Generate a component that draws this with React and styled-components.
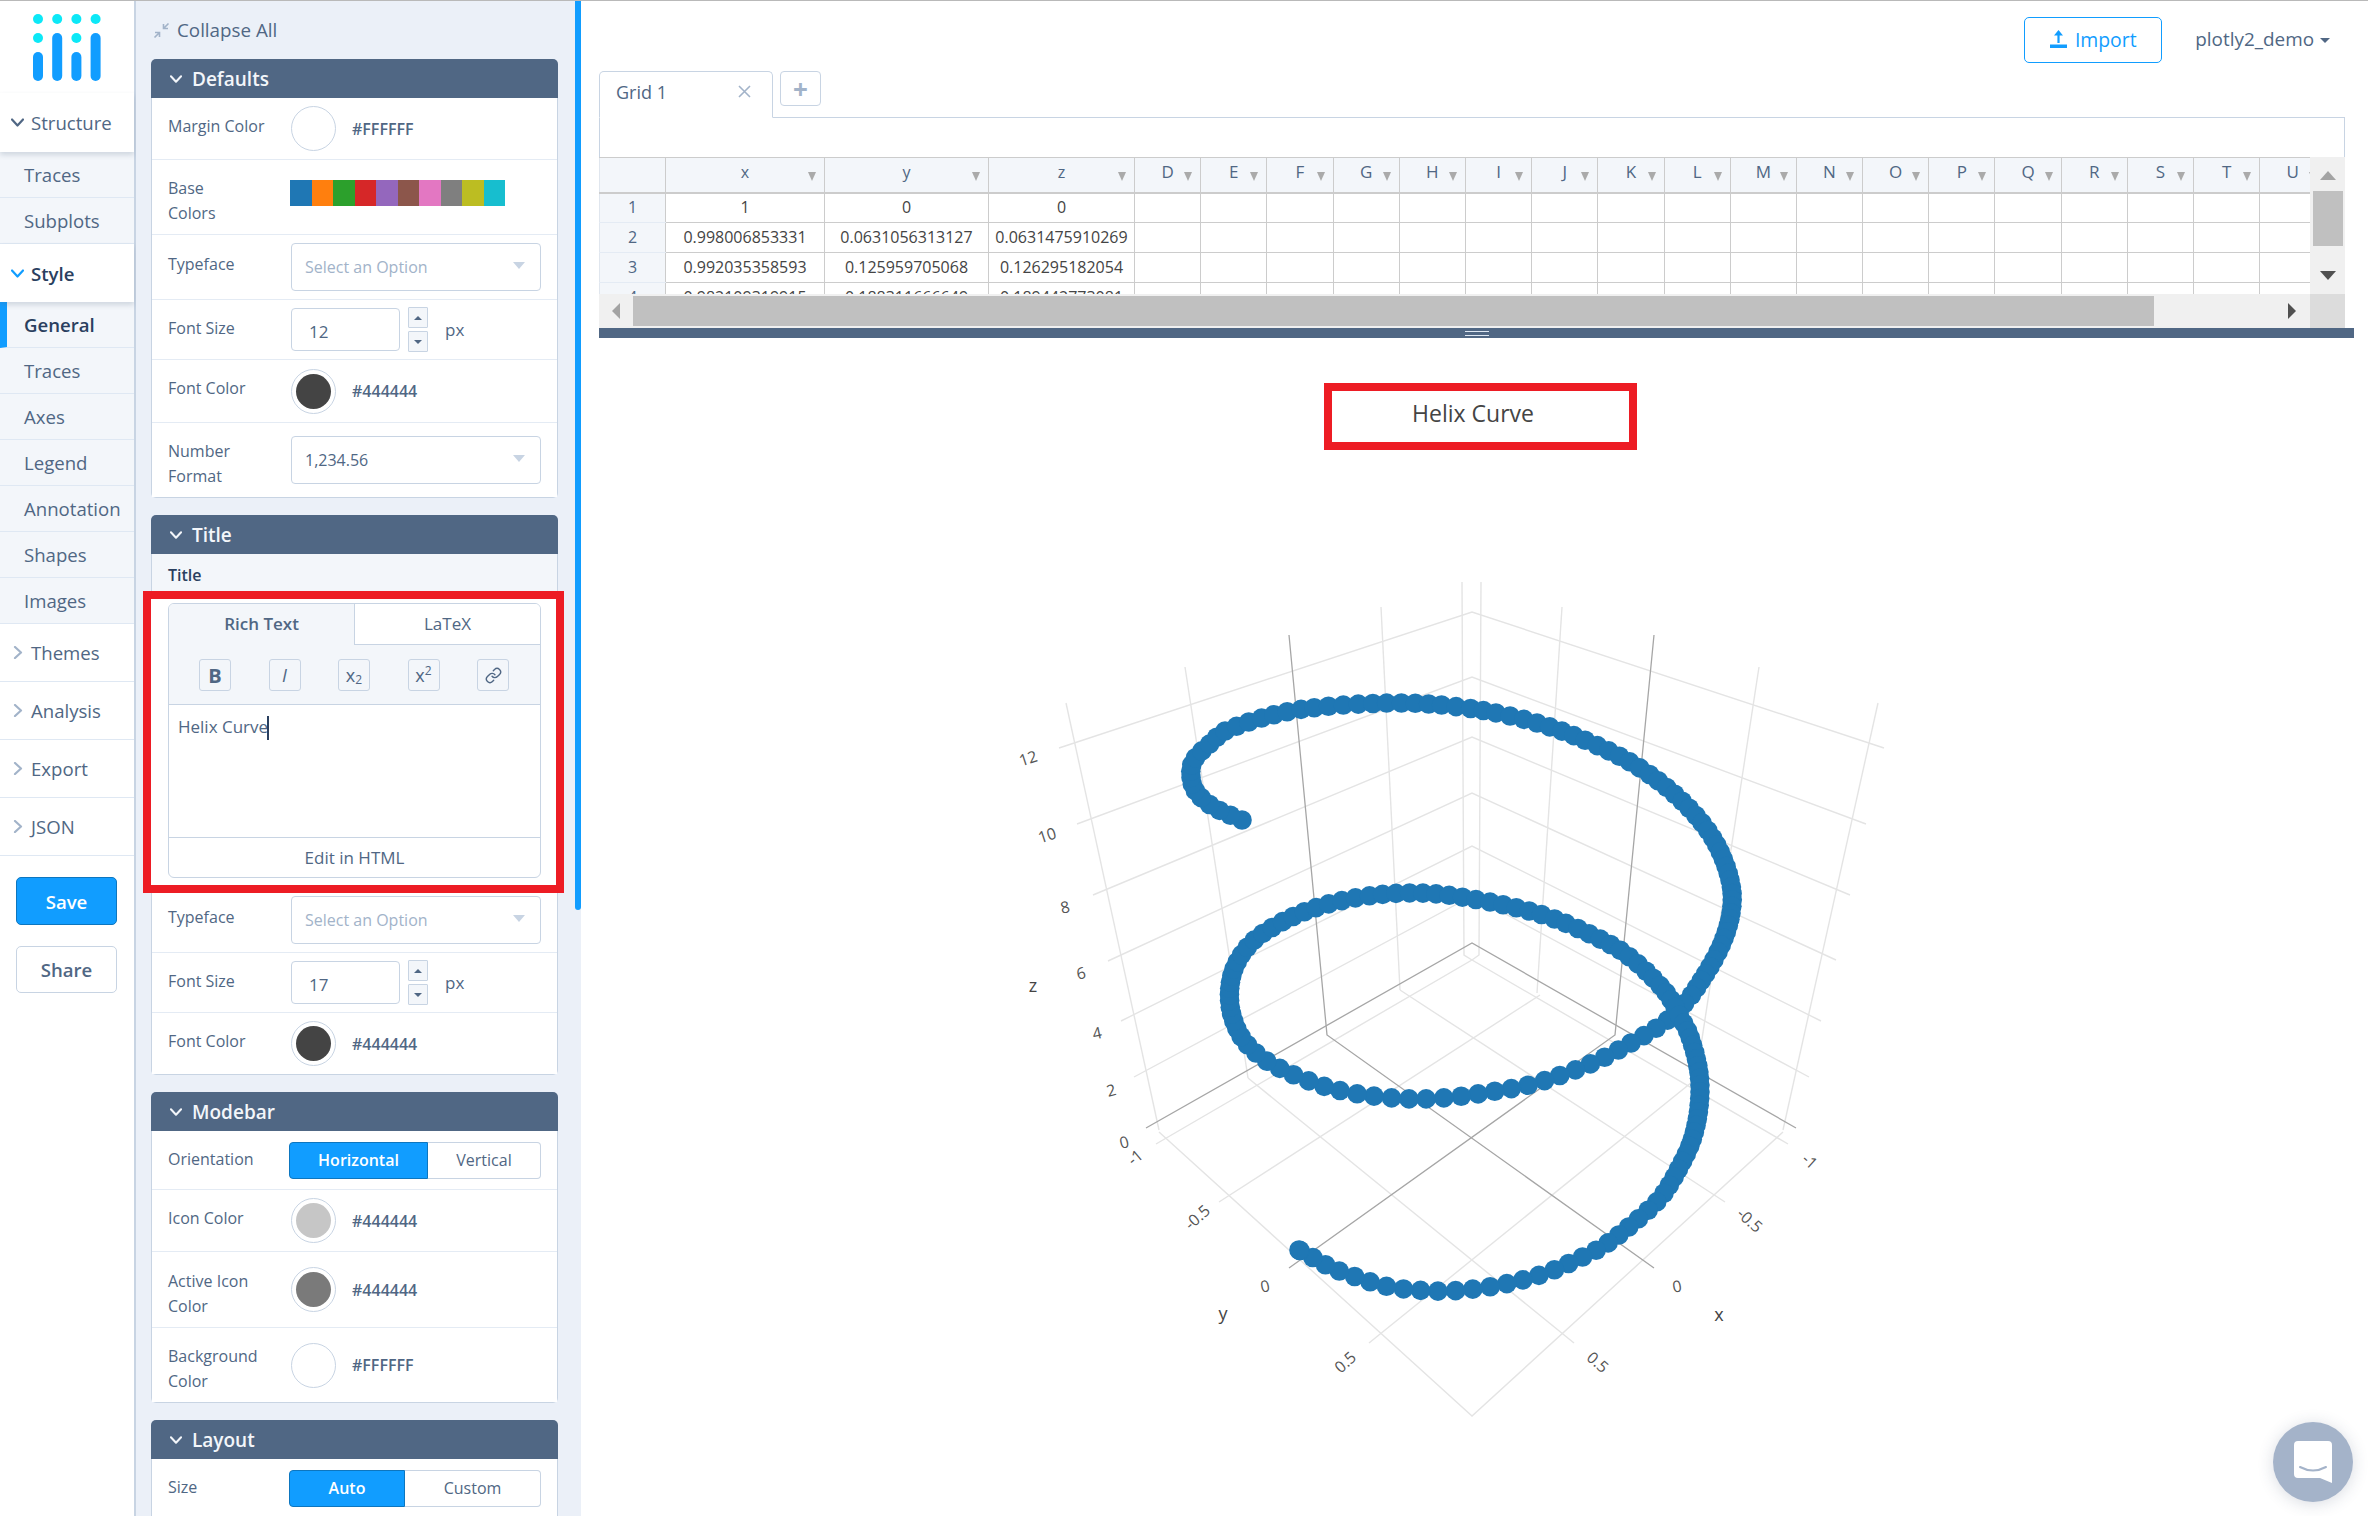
import React from "react";
import styled, { createGlobalStyle } from "styled-components";
import { Link } from "lucide-react";

const GlobalStyle = createGlobalStyle`
  html, body { margin: 0; padding: 0; background: #fff; }
  body { font-family: "Open Sans", "Noto Sans", sans-serif; color: #506784; }
  * { box-sizing: border-box; }
`;

const Page = styled.div`
  display: flex;
  width: 2368px;
  height: 1516px;
  overflow: hidden;
  position: relative;
  border-top: 1px solid #b9b9b9;
`;

/* left nav */
const Nav = styled.nav`
  width: 136px;
  flex: none;
  background: #fff;
  border-right: 2px solid #c8d4e3;
  display: flex;
  flex-direction: column;
`;
const LogoBox = styled.div`
  height: 92px;
  padding: 13px 0 0 33px;
`;
const NavHead = styled.div`
  height: ${(p) => p.$h || 59}px;
  display: flex;
  align-items: center;
  gap: 7px;
  padding: 0 0 0 11px;
  font-size: 18.6px;
  font-weight: ${(p) => (p.$active ? 600 : 400)};
  color: ${(p) => (p.$active ? "#2a3f5f" : "#506784")};
  background: #fff;
  position: relative;
  box-shadow: ${(p) => (p.$open ? "0 3px 5px rgba(80,103,132,.22)" : "none")};
  border-bottom: ${(p) => (p.$open ? "none" : "1px solid #dfe8f3")};
`;
const NavItem = styled.div`
  height: 46px;
  display: flex;
  align-items: center;
  padding-left: ${(p) => (p.$active ? 17 : 24)}px;
  font-size: 18.6px;
  font-weight: ${(p) => (p.$active ? 600 : 400)};
  color: ${(p) => (p.$active ? "#2a3f5f" : "#506784")};
  background: #f3f6fa;
  border-bottom: 1px solid #dfe8f3;
  border-left: ${(p) => (p.$active ? "7px solid #119dff" : "none")};
`;
const NavButton = styled.div`
  width: 101px;
  height: ${(p) => p.$h}px;
  margin: ${(p) => p.$top}px 0 0 16px;
  display: flex;
  align-items: center;
  justify-content: center;
  font-size: 18.6px;
  font-weight: 600;
  border-radius: 5px;
  color: ${(p) => (p.$primary ? "#fff" : "#506784")};
  background: ${(p) => (p.$primary ? "#119dff" : "#fff")};
  border: 1px solid ${(p) => (p.$primary ? "#0d76bf" : "#c8d4e3")};
`;

/* settings panel */
const Panel = styled.aside`
  width: 445px;
  flex: none;
  height: 100%;
  padding: 0 23px 0 15px;
  background: #ebf0f8;
  position: relative;
  overflow: hidden;
`;
const PanelThumb = styled.div`
  position: absolute;
  top: 0;
  right: 0;
  width: 6px;
  height: 909px;
  background: #119dff;
  border-radius: 0 0 3px 3px;
`;
const CollapseAll = styled.div`
  height: 58px;
  display: flex;
  align-items: center;
  gap: 7px;
  padding: 0 0 0 2px;
  font-size: 18.8px;
  color: #506784;
`;
const Section = styled.section`
  margin-bottom: 17px;
`;
const SectionHead = styled.div`
  height: 39px;
  display: flex;
  align-items: center;
  gap: 10px;
  padding-left: 19px;
  background: #506784;
  color: #f3f6fa;
  font-size: 19px;
  font-weight: 600;
  border-radius: 5px 5px 0 0;
`;
const SectionBody = styled.div`
  background: ${(p) => p.$bg || "#fff"};
  border: 1px solid #c8d4e3;
  border-top: none;
  border-radius: ${(p) => (p.$open ? 0 : "0 0 5px 5px")};
`;
const Row = styled.div`
  height: ${(p) => p.$h}px;
  display: flex;
  align-items: center;
  background: #fff;
  padding-bottom: ${(p) => p.$pb || 0}px;
  border-bottom: ${(p) => (p.$last ? "none" : "1px solid #e4ebf4")};
`;
const Label = styled.div`
  width: 139px;
  flex: none;
  padding-left: 16px;
  font-size: 16px;
  line-height: 25px;
  color: #506784;
  padding-bottom: ${(p) => (p.$two ? 0 : p.$lift ?? 5)}px;
  padding-top: ${(p) => (p.$two ? 8 : 0)}px;
`;
const PlainLabel = styled.div`
  height: 37px;
  display: flex;
  align-items: center;
  padding: 5px 0 0 16px;
  font-size: 16px;
  font-weight: 600;
  color: #2a3f5f;
`;
const Circle = styled.div`
  width: 45px;
  height: 45px;
  flex: none;
  border-radius: 50%;
  border: 1px solid #c8d4e3;
  background: #fff;
  display: flex;
  align-items: center;
  justify-content: center;
`;
const Dot = styled.div`
  width: 35px;
  height: 35px;
  border-radius: 50%;
  background: ${(p) => p.$color};
`;
const Hex = styled.div`
  margin-left: 16px;
  font-size: 16px;
  font-weight: 600;
  color: #506784;
`;
const Palette = styled.div`
  display: flex;
  align-self: flex-start;
  margin-left: -1px;
  margin-top: 20px;
`;
const PaletteCell = styled.div`
  width: 21.5px;
  height: 26px;
  background: ${(p) => p.$color};
`;
const SelectBox = styled.div`
  width: 250px;
  height: 48px;
  display: flex;
  align-items: center;
  justify-content: space-between;
  padding: 0 15px 0 13px;
  border: 1px solid #c8d4e3;
  border-radius: 4px;
  background: #fff;
  font-size: 16px;
  color: ${(p) => (p.$placeholder ? "#a2b3c9" : "#506784")};
`;
const SelectArrow = styled.span`
  width: 0;
  height: 0;
  margin-bottom: 4px;
  border-left: 6px solid transparent;
  border-right: 6px solid transparent;
  border-top: 7px solid #c8d4e3;
`;
const NumberBox = styled.div`
  width: 109px;
  height: 43px;
  display: flex;
  align-items: center;
  padding: 3px 0 0 17px;
  border: 1px solid #c8d4e3;
  border-radius: 4px;
  background: #fff;
  font-size: 17px;
  color: #506784;
`;
const Spinner = styled.div`
  display: flex;
  flex-direction: column;
  gap: 3px;
  margin-left: 8px;
`;
const SpinButton = styled.div`
  width: 20px;
  height: 21px;
  display: flex;
  align-items: center;
  justify-content: center;
  background: #f3f6fa;
  border: 1px solid #c8d4e3;
  border-radius: 1px;
`;
const SpinArrow = styled.span`
  width: 0;
  height: 0;
  border-left: 4px solid transparent;
  border-right: 4px solid transparent;
  ${(p) => (p.$up ? "border-bottom: 4px solid #506784;" : "border-top: 4px solid #506784;")}
`;
const Unit = styled.div`
  margin-left: 17px;
  font-size: 17px;
  color: #506784;
`;
const RadioGroup = styled.div`
  width: 252px;
  height: 37px;
  margin-left: -2px;
  display: flex;
`;
const RadioOption = styled.div`
  width: ${(p) => p.$w}px;
  flex: ${(p) => (p.$w ? "none" : 1)};
  display: flex;
  align-items: center;
  justify-content: center;
  font-size: 16px;
  font-weight: ${(p) => (p.$active ? 600 : 400)};
  color: ${(p) => (p.$active ? "#fff" : "#506784")};
  background: ${(p) => (p.$active ? "#119dff" : "#fff")};
  border: 1px solid ${(p) => (p.$active ? "#0d76bf" : "#c8d4e3")};
  border-left-width: ${(p) => (p.$active ? 1 : 0)}px;
  border-radius: ${(p) => (p.$active ? "4px 0 0 4px" : "0 4px 4px 0")};
`;

/* rich text box with the red highlight */
const Highlight = styled.div`
  height: 302px;
  margin: 0 -7px 0 -9px;
  padding: 4px 15px 7px 17px;
  background: #fff;
  border: 8px solid #ed1c24;
  position: relative;
`;
const Editor = styled.div`
  height: 275px;
  display: flex;
  flex-direction: column;
  border: 1px solid #c8d4e3;
  border-radius: 6px;
  overflow: hidden;
`;
const EditorTabs = styled.div`
  height: 41px;
  flex: none;
  display: flex;
`;
const EditorTab = styled.div`
  width: ${(p) => (p.$active ? "185px" : "auto")};
  flex: ${(p) => (p.$active ? "none" : 1)};
  display: flex;
  align-items: center;
  justify-content: center;
  padding-bottom: 2px;
  font-size: 17px;
  font-weight: ${(p) => (p.$active ? 600 : 400)};
  color: #506784;
  background: ${(p) => (p.$active ? "#f3f6fa" : "#fff")};
  border-left: ${(p) => (p.$active ? "none" : "1px solid #c8d4e3")};
  border-bottom: ${(p) => (p.$active ? "none" : "1px solid #c8d4e3")};
`;
const EditorToolbar = styled.div`
  height: 60px;
  flex: none;
  display: flex;
  justify-content: space-between;
  align-items: flex-start;
  padding: 14px 31px 0 30px;
  background: #f3f6fa;
  border-bottom: 1px solid #c8d4e3;
`;
const ToolButton = styled.div`
  width: 32px;
  height: 32px;
  display: flex;
  align-items: center;
  justify-content: center;
  background: #f3f6fa;
  border: 1px solid #c8d4e3;
  border-radius: 3px;
  color: #506784;
  font-size: ${(p) => (p.$bold ? 20 : 18)}px;
  font-weight: ${(p) => (p.$bold ? 700 : 400)};
  font-style: ${(p) => (p.$italic ? "italic" : "normal")};
  sub { font-size: 12px; line-height: 0; margin-top: 9px; }
  sup { font-size: 12px; line-height: 0; margin-top: -9px; }
`;
const EditorText = styled.div`
  flex: 1;
  padding: 9px 9px;
  font-size: 17px;
  line-height: 25px;
  color: #506784;
`;
const Caret = styled.span`
  display: inline-block;
  width: 2px;
  height: 24px;
  margin-left: -1px;
  vertical-align: middle;
  background: #2a3f5f;
`;
const EditorFooter = styled.div`
  height: 40px;
  flex: none;
  display: flex;
  align-items: center;
  justify-content: center;
  font-size: 17px;
  color: #506784;
  border-top: 1px solid #c8d4e3;
`;

/* main column */
const Main = styled.main`
  flex: 1;
  min-width: 0;
  display: flex;
  flex-direction: column;
`;
const TopBar = styled.div`
  height: 70px;
  flex: none;
  display: flex;
  justify-content: flex-end;
  align-items: flex-start;
  padding: 16px 38px 0 0;
`;
const ImportButton = styled.div`
  width: 138px;
  height: 46px;
  display: flex;
  align-items: center;
  justify-content: center;
  gap: 8px;
  padding-bottom: 2px;
  color: #119dff;
  font-size: 19.4px;
  border: 1px solid #119dff;
  border-radius: 5px;
`;
const UserMenu = styled.div`
  height: 46px;
  margin-left: 33px;
  padding-bottom: 2px;
  display: flex;
  align-items: center;
  gap: 6px;
  font-size: 18.9px;
  color: #506784;
`;
const UserCaret = styled.span`
  width: 0;
  height: 0;
  margin-top: 3px;
  border-left: 5px solid transparent;
  border-right: 5px solid transparent;
  border-top: 5px solid #506784;
`;
const GridPane = styled.div`
  flex: none;
  margin-left: 18px;
  width: 1746px;
`;
const TabBar = styled.div`
  height: 47px;
  display: flex;
  align-items: flex-start;
  gap: 7px;
  border-bottom: 1px solid #c8d4e3;
`;
const GridTab = styled.div`
  width: 174px;
  height: 47px;
  display: flex;
  align-items: center;
  justify-content: space-between;
  padding: 0 21px 6px 16px;
  background: #fff;
  font-size: 18px;
  color: #506784;
  border: 1px solid #c8d4e3;
  border-bottom: 1px solid #fff;
  border-radius: 5px 5px 0 0;
`;
const AddTab = styled.div`
  width: 41px;
  height: 35px;
  display: flex;
  align-items: center;
  justify-content: center;
  border: 1px solid #c8d4e3;
  border-radius: 4px;
  color: #a2b3c9;
  font-size: 26px;
  font-weight: 700;
  line-height: 1;
`;
const TabSpacer = styled.div`
  height: 39px;
  border-left: 1px solid #c8d4e3;
  border-right: 1px solid #c8d4e3;
`;
const Sheet = styled.div`
  height: 171px;
  display: grid;
  grid-template-columns: 1fr 35px;
  grid-template-rows: 137px 34px;
`;
const SheetView = styled.div`
  overflow: hidden;
`;
const Table = styled.table`
  table-layout: fixed;
  width: 1727px;
  border-collapse: collapse;
  font-size: 16px;
  color: #444;
`;
const HeadCell = styled.th`
  height: 35px;
  padding: 0 0 6px 0;
  position: relative;
  background: #f3f6fa;
  color: #506784;
  font-weight: 400;
  font-size: ${(p) => (p.$wide ? 16 : 17)}px;
  text-align: center;
  border: 1px solid #ccc;
  border-bottom-width: 2px;
  border-left-color: #e0e6ee;
`;
const FilterMark = styled.span`
  position: absolute;
  right: 8px;
  top: 14px;
  border-left: 4px solid transparent;
  border-right: 4px solid transparent;
  border-top: 9px solid #aaa;
`;
const RowHead = styled.td`
  height: 30px;
  padding: 0 0 1px;
  text-align: center;
  background: #f3f6fa;
  color: #506784;
  border: 1px solid #ccc;
  border-top-color: #e4ebf4;
  border-bottom-color: #e4ebf4;
  border-left-color: #e0e6ee;
`;
const Cell = styled.td`
  height: 30px;
  padding: 0 0 1px;
  text-align: center;
  white-space: nowrap;
  overflow: hidden;
  border: 1px solid #ccc;
`;
const VScroll = styled.div`
  background: #f0f0f0;
  display: flex;
  flex-direction: column;
  align-items: center;
  padding-top: 14px;
`;
const VThumb = styled.div`
  width: 30px;
  height: 55px;
  margin: 11px 0 25px;
  background: #c0c0c0;
`;
const ScrollArrow = styled.span`
  width: 0;
  height: 0;
  ${(p) => p.$dir === "up" && `border-left: 8px solid transparent; border-right: 8px solid transparent; border-bottom: 9px solid ${p.$color};`}
  ${(p) => p.$dir === "down" && `border-left: 8px solid transparent; border-right: 8px solid transparent; border-top: 9px solid ${p.$color};`}
  ${(p) => p.$dir === "left" && `border-top: 8px solid transparent; border-bottom: 8px solid transparent; border-right: 8px solid ${p.$color};`}
  ${(p) => p.$dir === "right" && `border-top: 8px solid transparent; border-bottom: 8px solid transparent; border-left: 8px solid ${p.$color};`}
`;
const HScroll = styled.div`
  background: #f0f0f0;
  display: flex;
  align-items: center;
  padding-right: 14px;
`;
const HArrowSlot = styled.div`
  width: 34px;
  display: flex;
  justify-content: center;
`;
const HThumb = styled.div`
  width: 1521px;
  height: 30px;
  margin-right: auto;
  background: #c0c0c0;
`;
const Corner = styled.div`
  background: #dcdcdc;
`;
const Splitter = styled.div`
  width: 1755px;
  height: 10px;
  margin-left: 18px;
  flex: none;
  background: #506784;
  display: flex;
  justify-content: center;
  align-items: center;
`;
const SplitGrip = styled.div`
  width: 24px;
  height: 5px;
  border-top: 1px solid #dfe8f3;
  border-bottom: 1px solid #dfe8f3;
`;
const Plot = styled.div`
  flex: 1;
  position: relative;
`;
const PlotSvg = styled.svg`
  position: absolute;
  inset: 0;
  font-family: "Open Sans", sans-serif;
`;
const PlotTitle = styled.div`
  position: absolute;
  left: 743px;
  top: 45px;
  width: 313px;
  height: 67px;
  display: flex;
  align-items: center;
  justify-content: center;
  padding: 0 15px 8px 0;
  font-size: 23px;
  color: #444;
  border: 8px solid #ed1c24;
`;
const ChatBubble = styled.div`
  position: absolute;
  right: 15px;
  bottom: 14px;
  width: 80px;
  height: 80px;
  display: flex;
  align-items: center;
  justify-content: center;
  border-radius: 50%;
  background: #a4b3c9;
  box-shadow: 0 2px 16px rgba(42, 63, 95, 0.18);
`;

const Chevron = ({ dir = "down", color = "#506784", size = 13, width = 2.2 }) => (
  <svg width={size} height={size} viewBox="0 0 13 13" fill="none" style={{ flex: "none" }}>
    <path
      d={dir === "down" ? "M1 3.5 L6.5 9.5 L12 3.5" : "M4 1 L10 6.5 L4 12"}
      stroke={color}
      strokeWidth={width}
      strokeLinecap="round"
      strokeLinejoin="round"
    />
  </svg>
);

const CloseIcon = () => (
  <svg width="13" height="13" viewBox="0 0 13 13" fill="none" stroke="#a2b3c9" strokeWidth="1.6">
    <path d="M1 1 L12 12 M12 1 L1 12" />
  </svg>
);

const Logo = () => (
  <svg width="68" height="68" viewBox="0 0 68 68" fill="#119dff">
    <g fill="#0ce8f7">
      <circle cx="5" cy="5" r="5" />
      <circle cx="24.2" cy="5" r="5" />
      <circle cx="43.4" cy="5" r="5" />
      <circle cx="62.6" cy="5" r="5" />
      <circle cx="5" cy="24" r="5" />
      <circle cx="43.4" cy="24" r="5" />
    </g>
    <rect x="0" y="38" width="10" height="29" rx="5" />
    <rect x="19.2" y="19" width="10" height="48" rx="5" />
    <rect x="38.4" y="38" width="10" height="29" rx="5" />
    <rect x="57.6" y="19" width="10" height="48" rx="5" />
  </svg>
);

const CollapseIcon = () => (
  <svg width="17" height="17" viewBox="0 0 17 17" fill="none" stroke="#a2b3c9" strokeWidth="1.6">
    <path d="M15.5 1.5 L11 6 M10.5 2 V6.5 H15" />
    <path d="M1.5 15.5 L6 11 M2 10.5 H6.5 V15" />
  </svg>
);

const UploadIcon = () => (
  <svg width="17" height="18" viewBox="0 0 17 18" fill="#119dff">
    <rect x="0" y="14.5" width="17" height="3.5" />
    <path d="M8.5 0 L13 5.5 H9.6 V13 H7.4 V5.5 H4 Z" />
  </svg>
);

const ChatIcon = () => (
  <svg width="38" height="42" viewBox="0 0 38 42">
    <path d="M4 0 H34 Q38 0 38 4 V42 L26 37 H4 Q0 37 0 33 V4 Q0 0 4 0 Z" fill="#fff" />
    <path d="M6 26 Q19 33 32 26" fill="none" stroke="#a4b3c9" strokeWidth="2" strokeLinecap="round" />
  </svg>
);

const PALETTE = ["#1f77b4", "#ff7f0e", "#2ca02c", "#d62728", "#9467bd", "#8c564b", "#e377c2", "#7f7f7f", "#bcbd22", "#17becf"];
const STYLE_ITEMS = ["General", "Traces", "Axes", "Legend", "Annotation", "Shapes", "Images"];
const LETTERS = "DEFGHIJKLMNOPQRSTU".split("");
const ROWS = [
  ["1", "1", "0", "0"],
  ["2", "0.998006853331", "0.0631056313127", "0.0631475910269"],
  ["3", "0.992035358593", "0.125959705068", "0.126295182054"],
  ["4", "0.982109319915", "0.188311666649", "0.189442773081"],
];

/* plot geometry, in page pixels */
const GRID_LINES = [
  // back walls, one chevron for each z tick
  "1059,748 1472,612 1884,748",
  "1077,824 1472,677 1866,824",
  "1093,895 1472,737 1850,895",
  "1108,961 1472,793 1836,960",
  "1121,1021 1472,846 1821,1021",
  "1134,1077 1472,896 1809,1077",
  // wall verticals
  "1066,703 1159,1130",
  "1185,667 1248,1078",
  "1381,607 1400,990",
  "1462,582 1464,955 1472,960 1479,955 1481,582",
  "1562,607 1537,993",
  "1759,667 1696,1078",
  "1878,703 1783,1130",
  // floor
  "1156,1144 1472,960 1788,1144",
  "1159,1132 1472,1416 1783,1132",
  "1248,1078 1574,1343",
  "1400,990 1725,1202",
  "1697,1078 1369,1343",
  "1540,995 1219,1202",
];
const AXIS_LINES = [
  "1146,1128 1472,943 1796,1128",
  "1289,635 1327,1035 1654,1268",
  "1654,635 1615,1035 1289,1268",
];
const HELIX = [
  [1242, 820], [1215, 808], [1197, 793], [1191, 777], [1194, 760], [1212, 742], [1232, 728], [1297, 710], [1391, 703], [1467, 708],
  [1537, 723], [1596, 745], [1643, 770], [1684, 803], [1714, 840], [1730, 880], [1731, 913], [1719, 950],
  [1693, 993], [1675, 1013], [1661, 1025], [1631, 1043], [1599, 1060], [1567, 1073], [1529, 1085], [1490, 1092],
  [1454, 1097], [1417, 1099], [1382, 1097], [1347, 1092], [1317, 1084], [1279, 1068], [1256, 1053], [1239, 1033],
  [1230, 1005], [1232, 975], [1245, 950], [1268, 930], [1309, 910], [1361, 897], [1420, 893], [1479, 900],
  [1543, 915], [1596, 937], [1631, 958], [1664, 990], [1678, 1013], [1690, 1037], [1699, 1073], [1699, 1107],
  [1692, 1140], [1678, 1170], [1661, 1197], [1637, 1220], [1605, 1245], [1576, 1260], [1546, 1273], [1514, 1282],
  [1482, 1288], [1448, 1291], [1415, 1290], [1385, 1286], [1356, 1277], [1332, 1268], [1312, 1257], [1299, 1250],
];
const TICKS = [
  ["12", 1028, 758, -18], ["10", 1047, 835, -18], ["8", 1065, 907, -12], ["6", 1081, 973, -12],
  ["4", 1097, 1033, -12], ["2", 1111, 1090, -15], ["0", 1124, 1142, -15],
  ["-1", 1135, 1157, -40], ["-0.5", 1197, 1217, -42], ["0", 1265, 1286, -12], ["0.5", 1345, 1362, -42],
  ["-1", 1810, 1161, 42], ["-0.5", 1750, 1220, 42], ["0", 1677, 1286, -10], ["0.5", 1598, 1362, 42],
];
const AXIS_TITLES = [["z", 1033, 985], ["y", 1223, 1313], ["x", 1719, 1314]];

// walk a Catmull-Rom through the traced points, markers bunch up where the curve runs vertically
function helixMarkers() {
  const fine = [];
  const steps = 40;
  for (let i = 0; i < HELIX.length - 1; i++) {
    const p0 = HELIX[Math.max(i - 1, 0)];
    const p1 = HELIX[i];
    const p2 = HELIX[i + 1];
    const p3 = HELIX[Math.min(i + 2, HELIX.length - 1)];
    for (let s = 0; s < steps; s++) {
      const t = s / steps;
      const f = (a, b, c, d) =>
        0.5 * (2 * b + (c - a) * t + (2 * a - 5 * b + 4 * c - d) * t * t + (3 * b - a - 3 * c + d) * t * t * t);
      fine.push([f(p0[0], p1[0], p2[0], p3[0]), f(p0[1], p1[1], p2[1], p3[1])]);
    }
  }
  const out = [fine[0]];
  let last = fine[0];
  for (let i = 1; i < fine.length; i++) {
    const dx = fine[i][0] - last[0];
    const dy = fine[i][1] - last[1];
    const d = Math.hypot(dx, dy);
    const along = Math.abs(dx / (d || 1));
    const wide = fine[i][1] < 1000 ? 13 : 17;
    if (d >= 6 + (wide - 6) * along * along) {
      out.push(fine[i]);
      last = fine[i];
    }
  }
  out.push(HELIX[HELIX.length - 1]);
  return out;
}

function HelixPlot() {
  const markers = React.useMemo(helixMarkers, []);
  return (
    <PlotSvg width="1787" height="1178" viewBox="581 338 1787 1178">
      {GRID_LINES.map((pts) => (
        <polyline key={pts} points={pts} fill="none" stroke="#e4e4e4" strokeWidth="1.4" />
      ))}
      {AXIS_LINES.map((pts) => (
        <polyline key={pts} points={pts} fill="none" stroke="#a6a6a6" strokeWidth="1.3" />
      ))}
      {TICKS.map(([label, x, y, rot], i) => (
        <text key={i} x={x} y={y} fontSize="16" fill="#555" textAnchor="middle" dominantBaseline="central" transform={`rotate(${rot} ${x} ${y})`}>
          {label}
        </text>
      ))}
      {AXIS_TITLES.map(([label, x, y]) => (
        <text key={label} x={x} y={y} fontSize="18" fill="#444" textAnchor="middle" dominantBaseline="central">
          {label}
        </text>
      ))}
      {markers.map(([x, y], i) => (
        <circle key={i} cx={x} cy={y} r="9.8" fill="#1f77b4" />
      ))}
    </PlotSvg>
  );
}

const ColorRow = ({ label, two, color, hex, h, last }) => (
  <Row $h={h} $last={last}>
    <Label $two={two}>{label}</Label>
    <Circle>{color !== "#fff" && <Dot $color={color} />}</Circle>
    <Hex>{hex}</Hex>
  </Row>
);

const SizeRow = ({ value }) => (
  <Row $h={60}>
    <Label $lift={3}>Font Size</Label>
    <NumberBox>{value}</NumberBox>
    <Spinner>
      <SpinButton><SpinArrow $up /></SpinButton>
      <SpinButton><SpinArrow /></SpinButton>
    </Spinner>
    <Unit>px</Unit>
  </Row>
);

const SelectRow = ({ label, two, value, h, placeholder, last, pb }) => (
  <Row $h={h} $last={last} $pb={pb}>
    <Label $two={two}>{label}</Label>
    <SelectBox $placeholder={placeholder}>
      {value}
      <SelectArrow />
    </SelectBox>
  </Row>
);

const RadioRow = ({ label, active, other, activeWidth }) => (
  <Row $h={59}>
    <Label $lift={2}>{label}</Label>
    <RadioGroup>
      <RadioOption $active $w={activeWidth}>{active}</RadioOption>
      <RadioOption>{other}</RadioOption>
    </RadioGroup>
  </Row>
);

const Head = ({ children }) => (
  <SectionHead>
    <Chevron color="#f3f6fa" size={12} />
    {children}
  </SectionHead>
);

export default function App() {
  return (
    <>
      <GlobalStyle />
      <Page>
        <Nav>
          <LogoBox><Logo /></LogoBox>
          <NavHead $open><Chevron />Structure</NavHead>
          <NavItem>Traces</NavItem>
          <NavItem>Subplots</NavItem>
          <NavHead $open $active $h={58}><Chevron color="#119dff" />Style</NavHead>
          {STYLE_ITEMS.map((item, i) => (
            <NavItem key={item} $active={i === 0}>{item}</NavItem>
          ))}
          {["Themes", "Analysis", "Export", "JSON"].map((item) => (
            <NavHead key={item} $h={58}><Chevron dir="right" color="#a2b3c9" />{item}</NavHead>
          ))}
          <NavButton $primary $top={21} $h={48}>Save</NavButton>
          <NavButton $top={21} $h={47}>Share</NavButton>
        </Nav>

        <Panel>
          <PanelThumb />
          <CollapseAll><CollapseIcon />Collapse All</CollapseAll>

          <Section>
            <Head>Defaults</Head>
            <SectionBody>
              <ColorRow label="Margin Color" color="#fff" hex="#FFFFFF" h={62} />
              <Row $h={75}>
                <Label $two>Base<br />Colors</Label>
                <Palette>
                  {PALETTE.map((c) => <PaletteCell key={c} $color={c} />)}
                </Palette>
              </Row>
              <SelectRow label="Typeface" value="Select an Option" placeholder h={65} />
              <SizeRow value="12" />
              <ColorRow label="Font Color" color="#444444" hex="#444444" h={63} />
              <SelectRow label={<>Number<br />Format</>} two value="1,234.56" h={74} last />
            </SectionBody>
          </Section>

          <Section>
            <Head>Title</Head>
            <SectionBody $bg="#f3f6fa">
              <PlainLabel>Title</PlainLabel>
              <Highlight>
                <Editor>
                  <EditorTabs>
                    <EditorTab $active>Rich Text</EditorTab>
                    <EditorTab>LaTeX</EditorTab>
                  </EditorTabs>
                  <EditorToolbar>
                    <ToolButton $bold>B</ToolButton>
                    <ToolButton $italic>I</ToolButton>
                    <ToolButton>x<sub>2</sub></ToolButton>
                    <ToolButton>x<sup>2</sup></ToolButton>
                    <ToolButton><Link size={17} strokeWidth={2} /></ToolButton>
                  </EditorToolbar>
                  <EditorText>Helix Curve<Caret /></EditorText>
                  <EditorFooter>Edit in HTML</EditorFooter>
                </Editor>
              </Highlight>
              <SelectRow label="Typeface" value="Select an Option" placeholder h={60} pb={5} />
              <SizeRow value="17" />
              <ColorRow label="Font Color" color="#444444" hex="#444444" h={61} last />
            </SectionBody>
          </Section>

          <Section>
            <Head>Modebar</Head>
            <SectionBody>
              <RadioRow label="Orientation" active="Horizontal" other="Vertical" activeWidth={139} />
              <ColorRow label="Icon Color" color="#c6c6c6" hex="#444444" h={62} />
              <ColorRow label={<>Active Icon<br />Color</>} two color="#7a7a7a" hex="#444444" h={76} />
              <ColorRow label={<>Background<br />Color</>} two color="#fff" hex="#FFFFFF" h={74} last />
            </SectionBody>
          </Section>

          <Section>
            <Head>Layout</Head>
            <SectionBody $open>
              <RadioRow label="Size" active="Auto" other="Custom" activeWidth={116} />
            </SectionBody>
          </Section>
        </Panel>

        <Main>
          <TopBar>
            <ImportButton><UploadIcon />Import</ImportButton>
            <UserMenu>plotly2_demo<UserCaret /></UserMenu>
          </TopBar>
          <GridPane>
            <TabBar>
              <GridTab>Grid 1<CloseIcon /></GridTab>
              <AddTab>+</AddTab>
            </TabBar>
            <TabSpacer />
            <Sheet>
              <SheetView>
                <Table>
                  <colgroup>
                    <col width="66" />
                    <col width="159" />
                    <col width="164" />
                    <col width="146" />
                    {LETTERS.map((l) => <col key={l} width="66.2" />)}
                  </colgroup>
                  <thead>
                    <tr>
                      <HeadCell $wide />
                      {["x", "y", "z"].map((l) => (
                        <HeadCell key={l} $wide>{l}<FilterMark /></HeadCell>
                      ))}
                      {LETTERS.map((l) => (
                        <HeadCell key={l}>{l}<FilterMark /></HeadCell>
                      ))}
                    </tr>
                  </thead>
                  <tbody>
                    {ROWS.map(([n, x, y, z]) => (
                      <tr key={n}>
                        <RowHead>{n}</RowHead>
                        <Cell>{x}</Cell>
                        <Cell>{y}</Cell>
                        <Cell>{z}</Cell>
                        {LETTERS.map((l) => <Cell key={l} />)}
                      </tr>
                    ))}
                  </tbody>
                </Table>
              </SheetView>
              <VScroll>
                <ScrollArrow $dir="up" $color="#a3a3a3" />
                <VThumb />
                <ScrollArrow $dir="down" $color="#505050" />
              </VScroll>
              <HScroll>
                <HArrowSlot><ScrollArrow $dir="left" $color="#a3a3a3" /></HArrowSlot>
                <HThumb />
                <ScrollArrow $dir="right" $color="#505050" />
              </HScroll>
              <Corner />
            </Sheet>
          </GridPane>
          <Splitter><SplitGrip /></Splitter>
          <Plot>
            <HelixPlot />
            <PlotTitle>Helix Curve</PlotTitle>
          </Plot>
        </Main>

        <ChatBubble><ChatIcon /></ChatBubble>
      </Page>
    </>
  );
}
